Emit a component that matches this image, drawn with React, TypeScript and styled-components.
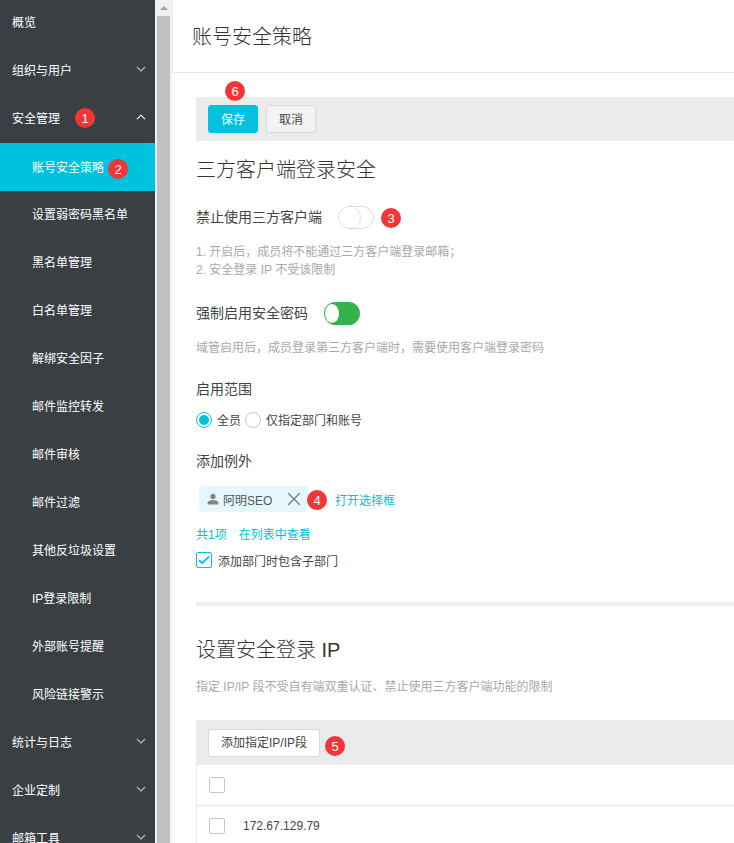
import styled, { createGlobalStyle } from "styled-components";
import { X } from "lucide-react";

const GlobalStyles = createGlobalStyle`
  * {
    box-sizing: border-box;
  }
  html, body {
    margin: 0;
    padding: 0;
    height: 100%;
    overflow: hidden;
    background: #fff;
    font-family: "Liberation Sans", "Noto Sans CJK SC", sans-serif;
    color: #444;
  }
`;

const Page = styled.div`
  position: relative;
  display: flex;
  width: 734px;
  height: 843px;
  overflow: hidden;
`;

const Sidebar = styled.nav`
  flex: 0 0 155px;
  height: 843px;
  overflow: hidden;
  background: #3a3f44;
`;

const MenuList = styled.div`
  margin-top: -2px;
`;

const MenuItem = styled.div<{ $sub?: boolean; $active?: boolean }>`
  display: flex;
  align-items: center;
  justify-content: space-between;
  height: 48px;
  margin: ${(p) => (p.$active ? "1px 0 -1px" : "0")};
  padding: 0 9px 2px ${(p) => (p.$sub ? "32px" : "12px")};
  font-size: 12px;
  color: #fff;
  background: ${(p) => (p.$active ? "#00c1de" : "transparent")};
`;

const Scrollbar = styled.div`
  flex: 0 0 17px;
  height: 843px;
  display: flex;
  flex-direction: column;
  align-items: center;
  background: #f1f1f1;
  padding: 0 2px;
`;

const ScrollArrow = styled.div`
  flex: 0 0 16px;
  display: flex;
  align-items: center;
  justify-content: center;
  &::before {
    content: "";
    border-left: 4px solid transparent;
    border-right: 4px solid transparent;
    border-bottom: 4px solid #a3a3a3;
  }
`;

const ScrollThumb = styled.div`
  flex: 1;
  width: 13px;
  background: #c1c1c1;
`;

const Main = styled.main`
  flex: 1;
  min-width: 0;
  overflow: hidden;
`;

const TitleBar = styled.header`
  display: flex;
  align-items: center;
  height: 73px;
  padding-left: 19px;
  padding-bottom: 1px;
  border-left: 1px solid #eeeeee;
  border-bottom: 1px solid #eaeaea;
  font-size: 20px;
  font-weight: 300;
  color: #333;
`;

const Content = styled.div`
  padding: 24px 0 0 24px;
  width: 562px;
`;

const Toolbar = styled.div<{ $h: number; $top?: number }>`
  display: flex;
  align-items: center;
  gap: 8px;
  height: ${(p) => p.$h}px;
  margin-top: ${(p) => p.$top ?? 0}px;
  padding-left: 12px;
  background: #eaebeb;
`;

const Button = styled.button<{ $primary?: boolean; $white?: boolean }>`
  height: 28px;
  padding: 0 ${(p) => (p.$white ? "12px" : "0")} 2px;
  width: ${(p) => (p.$white ? "auto" : "50px")};
  font: inherit;
  font-size: 12px;
  border-radius: 3px;
  color: ${(p) => (p.$primary ? "#fff" : "#444")};
  background: ${(p) => (p.$primary ? "#00c1de" : p.$white ? "#fff" : "#f3f3f3")};
  border: 1px solid ${(p) => (p.$primary ? "#00c1de" : "#d9d9d9")};
`;

const Heading = styled.h2<{ $top: number }>`
  margin: ${(p) => p.$top}px 0 0;
  font-size: 20px;
  line-height: 28px;
  font-weight: 300;
  color: #333;
`;

const FieldRow = styled.div<{ $top: number }>`
  display: flex;
  align-items: center;
  gap: 16px;
  height: 24px;
  margin-top: ${(p) => p.$top}px;
  font-size: 14px;
  line-height: 24px;
  color: #444;
`;

const Hint = styled.div<{ $top: number }>`
  margin-top: ${(p) => p.$top}px;
  font-size: 12px;
  line-height: 18px;
  color: #a8a8a8;
`;

const Switch = styled.span<{ $on?: boolean }>`
  display: flex;
  align-items: center;
  width: 36px;
  height: 23px;
  padding: ${(p) => (p.$on ? "0 0 0 1px" : "0")};
  border-radius: 12px;
  background: ${(p) => (p.$on ? "#35b34a" : "#fff")};
  border: ${(p) => (p.$on ? "0" : "1px solid #dcdcdc")};
  &::before {
    content: "";
    width: ${(p) => (p.$on ? "14px" : "21px")};
    height: ${(p) => (p.$on ? "19px" : "21px")};
    border-radius: 50%;
    background: #fff;
    box-shadow: ${(p) => (p.$on ? "none" : "1px 0 2px rgba(0,0,0,0.12)")};
  }
`;

const RadioGroup = styled.div`
  display: flex;
  align-items: center;
  height: 18px;
  margin-top: 10px;
  font-size: 12px;
  color: #444;
`;

const RadioLabel = styled.span`
  padding-bottom: 2px;
`;

const Radio = styled.span<{ $checked?: boolean }>`
  display: flex;
  align-items: center;
  justify-content: center;
  width: 16px;
  height: 16px;
  margin-right: 5px;
  margin-left: ${(p) => (p.$checked ? "0" : "4px")};
  border-radius: 50%;
  border: 1px solid ${(p) => (p.$checked ? "#00c1de" : "#c8c8c8")};
  &::before {
    content: "";
    display: ${(p) => (p.$checked ? "block" : "none")};
    width: 10px;
    height: 10px;
    border-radius: 50%;
    background: #00c1de;
  }
`;

const TagRow = styled.div`
  display: flex;
  align-items: center;
  margin-top: 13px;
  padding-left: 3px;
  height: 26px;
  font-size: 12px;
`;

const Tag = styled.div`
  display: flex;
  align-items: center;
  width: 109px;
  height: 26px;
  padding: 0 3px 0 8px;
  border-radius: 3px;
  background: #e5f7fa;
  color: #555;
`;

const TagName = styled.span`
  flex: 1;
  margin-left: 4px;
`;

const LinkText = styled.span`
  font-size: 12px;
  color: #00c1de;
`;

const OpenLink = styled(LinkText)`
  margin-left: 27px;
`;

const CountRow = styled.div`
  display: flex;
  gap: 12px;
  margin-top: 14px;
  height: 18px;
  line-height: 18px;
`;

const CheckRow = styled.div`
  display: flex;
  align-items: center;
  gap: 6px;
  margin-top: 7px;
  height: 18px;
  font-size: 12px;
  color: #444;
`;

const CheckBox = styled.span<{ $checked?: boolean }>`
  display: flex;
  align-items: center;
  justify-content: center;
  flex: 0 0 16px;
  width: 16px;
  height: 16px;
  border-radius: 2px;
  background: #fff;
  border: 1px solid ${(p) => (p.$checked ? "#00c1de" : "#c4c4c4")};
`;

const Divider = styled.div`
  height: 4px;
  margin-top: 33px;
  background: #eeeeee;
`;

const Table = styled.div`
  border-left: 1px solid #eaeaea;
`;

const TableRow = styled.div<{ $h: number }>`
  display: flex;
  align-items: center;
  height: ${(p) => p.$h}px;
  padding-left: 12px;
  border-bottom: 1px solid #eaeaea;
  font-size: 12px;
  color: #444;
`;

const IpCell = styled.span`
  margin-left: 18px;
`;

const Badge = styled.span<{ $x: number; $y: number }>`
  position: absolute;
  left: ${(p) => p.$x}px;
  top: ${(p) => p.$y}px;
  display: flex;
  align-items: center;
  justify-content: center;
  width: 20px;
  height: 20px;
  border-radius: 50%;
  background: #f33535;
  color: #fff;
  font-size: 13px;
`;

const Chevron = ({ up }: { up?: boolean }) => (
  <svg width="10" height="6" viewBox="0 0 10 6" fill="none">
    <path
      d={up ? "M1 5.2 5 1.2 9 5.2" : "M1 1 5 5 9 1"}
      stroke={up ? "#fff" : "#b7bcc4"}
      strokeWidth="1.1"
    />
  </svg>
);

const UserIcon = () => (
  <svg width="12" height="12" viewBox="0 0 12 12">
    <circle cx="6" cy="3.4" r="2.6" fill="#858585" />
    <path d="M.6 11.5V9.8C.6 8.2 3 7 6 7s5.4 1.2 5.4 2.8v1.7z" fill="#858585" />
  </svg>
);

const CheckMark = () => (
  <svg width="12" height="10" viewBox="0 0 12 10" fill="none">
    <path d="M1 5.2 4.3 8 11 1.6" stroke="#00c1de" strokeWidth="2" />
  </svg>
);

type NavEntry = { label: string; sub?: boolean; active?: boolean; open?: boolean; arrow?: boolean };

const navItems: NavEntry[] = [
  { label: "概览" },
  { label: "组织与用户", arrow: true },
  { label: "安全管理", arrow: true, open: true },
  { label: "账号安全策略", sub: true, active: true },
  { label: "设置弱密码黑名单", sub: true },
  { label: "黑名单管理", sub: true },
  { label: "白名单管理", sub: true },
  { label: "解绑安全因子", sub: true },
  { label: "邮件监控转发", sub: true },
  { label: "邮件审核", sub: true },
  { label: "邮件过滤", sub: true },
  { label: "其他反垃圾设置", sub: true },
  { label: "IP登录限制", sub: true },
  { label: "外部账号提醒", sub: true },
  { label: "风险链接警示", sub: true },
  { label: "统计与日志", arrow: true },
  { label: "企业定制", arrow: true },
  { label: "邮箱工具", arrow: true },
];

function App() {
  return (
    <Page>
      <GlobalStyles />
      <Sidebar>
        <MenuList>
          {navItems.map((item) => (
            <MenuItem key={item.label} $sub={item.sub} $active={item.active}>
              <span>{item.label}</span>
              {item.arrow && <Chevron up={item.open} />}
            </MenuItem>
          ))}
        </MenuList>
      </Sidebar>
      <Scrollbar>
        <ScrollArrow />
        <ScrollThumb />
      </Scrollbar>
      <Main>
        <TitleBar>账号安全策略</TitleBar>
        <Content>
          <Toolbar $h={44}>
            <Button $primary>保存</Button>
            <Button>取消</Button>
          </Toolbar>
          <Heading $top={15}>三方客户端登录安全</Heading>
          <FieldRow $top={21}>
            禁止使用三方客户端
            <Switch />
          </FieldRow>
          <Hint $top={14}>
            1. 开启后，成员将不能通过三方客户端登录邮箱；
            <br />
            2. 安全登录 IP 不受该限制
          </Hint>
          <FieldRow $top={22}>
            强制启用安全密码
            <Switch $on />
          </FieldRow>
          <Hint $top={14}>域管启用后，成员登录第三方客户端时，需要使用客户端登录密码</Hint>
          <FieldRow $top={20}>启用范围</FieldRow>
          <RadioGroup>
            <Radio $checked />
            <RadioLabel>全员</RadioLabel>
            <Radio />
            <RadioLabel>仅指定部门和账号</RadioLabel>
          </RadioGroup>
          <FieldRow $top={20}>添加例外</FieldRow>
          <TagRow>
            <Tag>
              <UserIcon />
              <TagName>阿明SEO</TagName>
              <X size={22} strokeWidth={1.3} color="#777" />
            </Tag>
            <OpenLink>打开选择框</OpenLink>
          </TagRow>
          <CountRow>
            <LinkText>共1项</LinkText>
            <LinkText>在列表中查看</LinkText>
          </CountRow>
          <CheckRow>
            <CheckBox $checked>
              <CheckMark />
            </CheckBox>
            添加部门时包含子部门
          </CheckRow>
          <Divider />
          <Heading $top={30}>设置安全登录 IP</Heading>
          <Hint $top={14}>指定 IP/IP 段不受自有端双重认证、禁止使用三方客户端功能的限制</Hint>
          <Toolbar $h={45} $top={24}>
            <Button $white>添加指定IP/IP段</Button>
          </Toolbar>
          <Table>
            <TableRow $h={41}>
              <CheckBox />
            </TableRow>
            <TableRow $h={40}>
              <CheckBox />
              <IpCell>172.67.129.79</IpCell>
            </TableRow>
          </Table>
        </Content>
      </Main>
      <Badge $x={75} $y={108}>1</Badge>
      <Badge $x={108} $y={159}>2</Badge>
      <Badge $x={381} $y={208}>3</Badge>
      <Badge $x={307} $y={490}>4</Badge>
      <Badge $x={325} $y={736}>5</Badge>
      <Badge $x={225} $y={81}>6</Badge>
    </Page>
  );
}

export default App;
